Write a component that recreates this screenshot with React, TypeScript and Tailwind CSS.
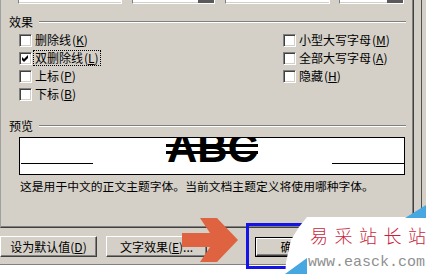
import React from "react";

const raised =
  "border border-t-white border-l-white border-r-[#404040] border-b-[#404040] shadow-[inset_-1px_-1px_0_#808080]";

function CheckBox({ checked = false }: { checked?: boolean }) {
  return (
    <span className="flex h-[13px] w-[13px] shrink-0 items-center justify-center border border-t-[#808080] border-l-[#808080] border-r-white border-b-white bg-white shadow-[inset_1px_1px_0_#404040,inset_-1px_-1px_0_#d4d0c8]">
      {checked && (
        <svg width="7" height="7" viewBox="0 0 7 7">
          <polygon points="0,2 2,4 6,0 6,3 2,7 0,5" fill="black" />
        </svg>
      )}
    </span>
  );
}

function Option({
  label,
  hot,
  checked,
  focused,
}: {
  label: string;
  hot: string;
  checked?: boolean;
  focused?: boolean;
}) {
  return (
    <div className="flex h-[18px] items-center">
      <CheckBox checked={checked} />
      <span
        className={`ml-[1px] flex h-[16px] items-center whitespace-nowrap border px-[1px] leading-none ${
          focused ? "border-dotted border-black" : "border-transparent"
        }`}
      >
        {label}
        <span className="ml-[1px]">
          (<u>{hot}</u>)
        </span>
      </span>
    </div>
  );
}

function GroupHeader({ title }: { title: string }) {
  return (
    <div className="flex h-[12px] shrink-0 items-center pl-[8px] pr-[7px]">
      <span className="leading-[12px]">{title}</span>
      <div className="ml-[6px] h-[2px] flex-1 border-t border-b border-t-[#808080] border-b-white" />
    </div>
  );
}

function Field({ className, drop }: { className: string; drop?: boolean }) {
  return (
    <div
      className={`flex h-[4px] border-b border-l border-r border-l-[#808080] border-r-white border-b-white bg-white shadow-[inset_0_-1px_0_#d4d0c8] ${className}`}
    >
      <div className="flex-1" />
      {drop && <div className="h-[3px] w-[16px] bg-[#5a5a5a]" />}
    </div>
  );
}

export default function App() {
  return (
    <div className="relative h-[277px] w-[426px] overflow-hidden bg-white font-['Noto_Sans_CJK_SC',sans-serif] text-[12px] text-black">
      {/* dialog */}
      <div className="flex h-[265px] border-b border-b-[#808080] bg-[#d4d0c8]">
        <div className="flex w-[414px] flex-col">
          {/* tab page */}
          <div className="flex h-[228px] w-[414px] flex-col border border-t-0 border-l-[#a0a0a0] border-r-[#404040] border-b-[#404040] shadow-[inset_-1px_-1px_0_#808080]">
            <div className="flex shrink-0">
              <Field className="ml-[17px] w-[104px]" />
              <Field className="ml-[10px] w-[83px]" drop />
              <Field className="ml-[10px] w-[105px]" />
              <Field className="ml-[9px] w-[65px]" drop />
            </div>

            <div className="mt-[12px]">
              <GroupHeader title="效果" />
            </div>

            <div className="mt-[3px] flex pl-[18px]">
              <div className="flex w-[264px] flex-col">
                <Option label="删除线" hot="K" />
                <Option label="双删除线" hot="L" checked focused />
                <Option label="上标" hot="P" />
                <Option label="下标" hot="B" />
              </div>
              <div className="flex flex-col">
                <Option label="小型大写字母" hot="M" />
                <Option label="全部大写字母" hot="A" />
                <Option label="隐藏" hot="H" />
              </div>
            </div>

            <div className="mt-[17px]">
              <GroupHeader title="预览" />
            </div>

            {/* preview */}
            <div className="relative ml-[18px] mt-[5px] flex h-[38px] w-[386px] shrink-0 items-start overflow-hidden border border-black bg-white">
              <div className="ml-[1px] mt-[25px] h-px w-[72px] bg-black" />
              <div className="flex flex-1 justify-center">
                <span className="-mt-[11px] font-['Liberation_Sans',sans-serif] text-[42px] font-bold leading-[42px]">
                  ABC
                </span>
              </div>
              <div className="mt-[25px] h-px w-[72px] bg-black" />
              <div className="absolute left-[146px] top-[6px] h-[3px] w-[92px] bg-black" />
              <div className="absolute left-[146px] top-[13px] h-[3px] w-[92px] bg-black" />
            </div>

            <div className="ml-[19px] mt-[5px] whitespace-nowrap text-[11.8px] leading-[12px]">
              这是用于中文的正文主题字体。当前文档主题定义将使用哪种字体。
            </div>
          </div>

          {/* buttons */}
          <div className="mt-[8px] flex h-[21px]">
            <button className={`flex w-[97px] items-center justify-center leading-none ${raised}`}>
              设为默认值(<u>D</u>)
            </button>
            <button className={`ml-[9px] flex w-[101px] items-center justify-center leading-none ${raised}`}>
              文字效果(<u>E</u>)...
            </button>
            <div className="ml-[48px] mt-[1px] flex h-[20px] w-[75px] border border-black">
              <button className={`flex flex-1 items-center justify-center leading-none ${raised}`}>
                确定
              </button>
            </div>
          </div>
        </div>
        <div className="flex flex-1">
          <div className="ml-[7px] w-px bg-[#505050]" />
        </div>
      </div>

      {/* annotation: blue box */}
      <div className="absolute left-[246px] top-[223px] h-[46px] w-[100px] border-[3px] border-[#1414e6]" />

      {/* annotation: arrow */}
      <svg
        className="absolute left-[180px] top-[216px]"
        width="60"
        height="48"
        viewBox="0 0 60 48"
      >
        <polygon
          points="2,17 30,17 20,2 37,2 58,24 37,46 20,46 30,31 2,31"
          fill="#df6340"
        />
      </svg>

      {/* watermark */}
      <div className="absolute left-[284px] top-[204px] h-[73px] w-[142px]">
        <svg className="absolute inset-0" width="142" height="73" viewBox="0 0 142 73">
          <polygon points="23,13 142,13 142,73 1,73 2,58 7,36 15,23" fill="#ffffff" />
          <polygon points="121,14 142,1 142,14" fill="#47a7e0" />
          <polygon points="1,70 23,54 23,70" fill="#47a7e0" />
        </svg>
        <div className="relative flex flex-col">
          <div className="ml-[26px] mt-[22px] whitespace-nowrap text-[18px] font-light leading-[18px] tracking-[6.5px] text-[#c81e3c]">
            易采站长站
          </div>
          <div className="ml-[24px] mt-[11px] whitespace-nowrap font-['Liberation_Mono',monospace] text-[15px] leading-[15px] text-[#909090]">
            www.easck.com
          </div>
        </div>
      </div>
    </div>
  );
}
